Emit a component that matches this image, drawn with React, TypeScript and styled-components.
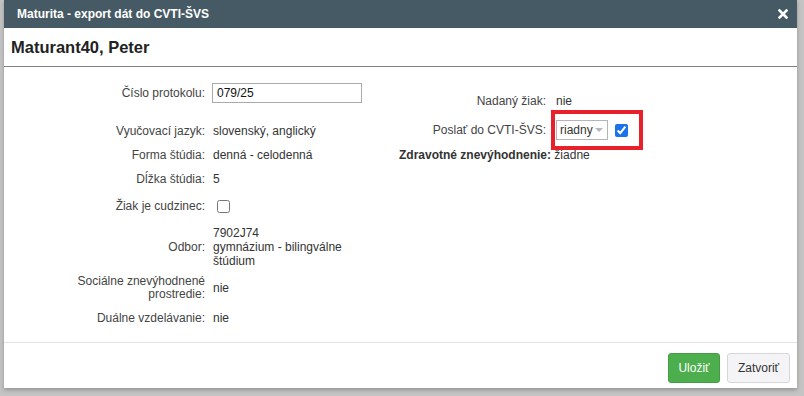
import React from 'react'
import styled, { createGlobalStyle } from 'styled-components'

const GlobalStyle = createGlobalStyle`
    html, body {
        margin: 0;
        padding: 0;
        background: #c4c4c4;
    }
    * {
        box-sizing: border-box;
    }
`

const CloseIcon = () => {
    return (
        <svg width="10" height="10" viewBox="0 0 10 10">
            <path d="M1.5 1.5 L8.5 8.5 M8.5 1.5 L1.5 8.5" stroke="#fff" strokeWidth="2.6" strokeLinecap="square" />
        </svg>
    )
}

const InfoRow = (props: any) => {
    return (
        <Row $after={props.after} $minH={props.minH}>
            <Label $width={props.labelWidth}>{props.label}</Label>
            <Value $gap={props.gap}>{props.children}</Value>
        </Row>
    )
}

const App = () => {
    return (
        <>
            <GlobalStyle />
            <Page>
                <Dialog>
                    <TitleBar>
                        <span>Maturita - export dát do CVTI-ŠVS</span>
                        <CloseIcon />
                    </TitleBar>
                    <Header>Maturant40, Peter</Header>
                    <Body>
                        <LeftCol>
                            <InfoRow label="Číslo protokolu:" after={11}>
                                <TextInput defaultValue="079/25" />
                            </InfoRow>
                            <InfoRow label="Vyučovací jazyk:">slovenský, anglický</InfoRow>
                            <InfoRow label="Forma štúdia:">denná - celodenná</InfoRow>
                            <InfoRow label="Dĺžka štúdia:">5</InfoRow>
                            <InfoRow label="Žiak je cudzinec:" minH={20}>
                                <CheckBox type="checkbox" />
                            </InfoRow>
                            <InfoRow label="Odbor:" after={-3}>
                                <Lines>
                                    <div>7902J74</div>
                                    <div>gymnázium - bilingválne</div>
                                    <div>štúdium</div>
                                </Lines>
                            </InfoRow>
                            <InfoRow label={<Lines $tight>Sociálne znevýhodnené<br />prostredie:</Lines>}>nie</InfoRow>
                            <InfoRow label="Duálne vzdelávanie:">nie</InfoRow>
                        </LeftCol>
                        <RightCol>
                            <InfoRow label="Nadaný žiak:" labelWidth={146} gap={10} after={2}>nie</InfoRow>
                            <InfoRow label="Poslať do CVTI-ŠVS:" labelWidth={146} gap={10}>
                                <Highlighted>
                                    <Select>
                                        <span>riadny</span>
                                        <Caret />
                                    </Select>
                                    <CheckBox type="checkbox" defaultChecked />
                                    <RedFrame />
                                </Highlighted>
                            </InfoRow>
                            <HealthLine>
                                <b>Zdravotné znevýhodnenie:</b> žiadne
                            </HealthLine>
                        </RightCol>
                    </Body>
                    <Footer>
                        <SaveBtn>Uložiť</SaveBtn>
                        <CloseBtn>Zatvoriť</CloseBtn>
                    </Footer>
                </Dialog>
            </Page>
        </>
    )
}

const Page = styled.div`
    width: 804px;
    height: 396px;
    padding: 0 7px 8px 4px;
    display: flex;
    background: #c4c4c4;
    font-family: "Liberation Sans", Arial, sans-serif;
`

const Dialog = styled.div`
    flex: 1;
    display: flex;
    flex-direction: column;
    background: #ffffff;
    box-shadow: 0 2px 4px rgba(0, 0, 0, 0.25);
`

const TitleBar = styled.div`
    height: 28px;
    padding: 0 9px 0 13px;
    display: flex;
    align-items: center;
    justify-content: space-between;
    background: #465a65;
    color: #ffffff;
    font-size: 12px;
    font-weight: bold;
`

const Header = styled.div`
    height: 39px;
    padding: 1px 0 0 7px;
    display: flex;
    align-items: center;
    border-bottom: 1px solid #808080;
    color: #222;
    font-size: 16.5px;
    font-weight: bold;
`

const Body = styled.div`
    flex: 1;
    display: flex;
    padding-top: 11px;
    font-size: 12px;
    color: #333;
`

const LeftCol = styled.div`
    width: 396px;
    display: flex;
    flex-direction: column;
`

const RightCol = styled.div`
    flex: 1;
    display: flex;
    flex-direction: column;
    padding-top: 11px;
`

const Row = styled.div<{ $after?: number; $minH?: number }>`
    display: flex;
    align-items: center;
    padding: 5px 0;
    min-height: ${(p) => (p.$minH ? p.$minH + 10 : 0)}px;
    margin-bottom: ${(p) => p.$after || 0}px;
    line-height: 14px;
`

const Label = styled.div<{ $width?: number }>`
    width: ${(p) => p.$width || 201}px;
    flex-shrink: 0;
    text-align: right;
    color: #444;
`

const Value = styled.div<{ $gap?: number }>`
    margin-left: ${(p) => p.$gap || 8}px;
    display: flex;
    align-items: center;
`

const Lines = styled.div<{ $tight?: boolean }>`
    line-height: ${(p) => (p.$tight ? 13 : 14)}px;
`

const TextInput = styled.input`
    width: 150px;
    height: 20px;
    margin-left: -1px;
    padding: 0 4px;
    border: 1px solid #aaa;
    font-family: "Liberation Sans", Arial, sans-serif;
    font-size: 12px;
    color: #111;
    &:focus {
        outline: none;
    }
`

const CheckBox = styled.input`
    width: 13px;
    height: 13px;
    margin: 0 0 0 4px;
    accent-color: #1a73e8;
`

const Highlighted = styled.div`
    position: relative;
    display: flex;
    align-items: center;
    gap: 3px;
`

const RedFrame = styled.div`
    position: absolute;
    left: -5px;
    top: -10px;
    right: -15px;
    bottom: -10px;
    border: 4px solid #e8202a;
    pointer-events: none;
`

const Select = styled.div`
    width: 52px;
    height: 20px;
    padding: 0 4px 0 3px;
    display: flex;
    align-items: center;
    justify-content: space-between;
    border: 1px solid #b5b5b5;
    color: #333;
`

const Caret = styled.span`
    width: 0;
    height: 0;
    border-left: 4px solid transparent;
    border-right: 4px solid transparent;
    border-top: 4px solid #b8b8b8;
`

const HealthLine = styled.div`
    margin: 3px 0 0 -1px;
    line-height: 14px;
    & > b {
        color: #333;
    }
`

const Footer = styled.div`
    height: 46px;
    padding: 10px 7px 4px 0;
    display: flex;
    justify-content: flex-end;
    gap: 7px;
    border-top: 1px solid #e3e3e3;
`

const SaveBtn = styled.button`
    height: 30px;
    width: 52px;
    padding: 0;
    background: #4cae4c;
    border: 1px solid #449d44;
    border-radius: 3px;
    color: #ffffff;
    font-family: "Liberation Sans", Arial, sans-serif;
    font-size: 12px;
    cursor: pointer;
`

const CloseBtn = styled.button`
    height: 30px;
    width: 63px;
    padding: 0;
    background: #f4f4f6;
    border: 1px solid #d6d6d6;
    border-radius: 3px;
    color: #333;
    font-family: "Liberation Sans", Arial, sans-serif;
    font-size: 12px;
    cursor: pointer;
`

export default App
